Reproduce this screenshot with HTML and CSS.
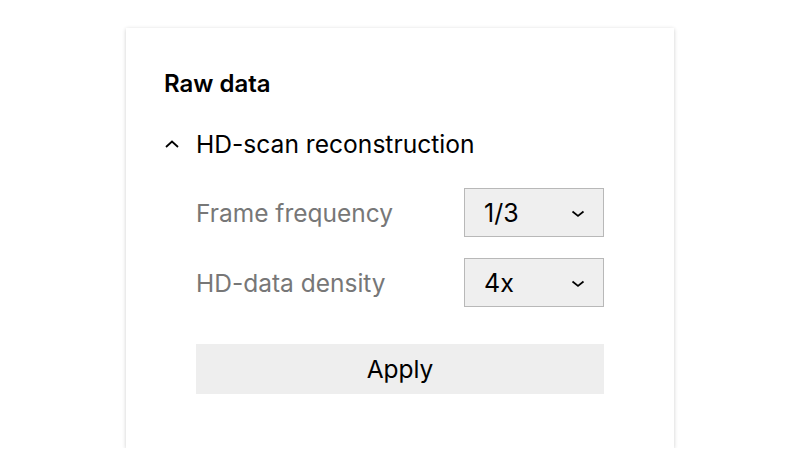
FILE: index.html
```html
<!DOCTYPE html>
<html>
<head>
<meta charset="utf-8">
<link rel="stylesheet" href="styles.css">
</head>
<body>
<div class="card">
  <h2 class="title">Raw data</h2>
  <div class="section-head">
    <svg class="caret-up" width="16" height="10" viewBox="0 0 16 10"><path d="M2 8 L8 2.5 L14 8" fill="none" stroke="#000" stroke-width="1.8"/></svg>
    <span>HD-scan reconstruction</span>
  </div>
  <div class="section-body">
    <div class="row">
      <span class="label">Frame frequency</span>
      <div class="select"><span>1/3</span><svg width="14" height="8" viewBox="0 0 14 8"><path d="M1.5 1.5 L7 6 L12.5 1.5" fill="none" stroke="#000" stroke-width="1.7"/></svg></div>
    </div>
    <div class="row">
      <span class="label">HD-data density</span>
      <div class="select"><span>4x</span><svg width="14" height="8" viewBox="0 0 14 8"><path d="M1.5 1.5 L7 6 L12.5 1.5" fill="none" stroke="#000" stroke-width="1.7"/></svg></div>
    </div>
    <button class="apply">Apply</button>
  </div>
</div>
</body>
</html>
```

FILE: styles.css
```css
html, body {
  margin: 0;
  padding: 0;
  background: #fff;
}
body {
  font-family: Inter, "Liberation Sans", sans-serif;
  color: #000;
  padding-top: 28px;
}
.card {
  box-sizing: border-box;
  width: 548px;
  height: 420px;
  margin-left: 126px;
  background: #fff;
  box-shadow: 0 1px 4px rgba(0,0,0,0.2);
  padding: 42px 70px 0 38px;
}
.title {
  margin: 0;
  font-size: 24px;
  font-weight: 600;
  line-height: 28px;
}
.section-head {
  display: flex;
  align-items: center;
  margin-top: 31px;
  height: 30px;
  font-size: 24.6px;
  line-height: 30px;
}
.caret-up {
  margin-right: 16px;
  margin-top: -1px;
}
.section-body {
  padding-left: 32px;
  margin-top: 29px;
}
.row {
  display: flex;
  align-items: center;
  justify-content: space-between;
  margin-bottom: 21px;
}
.label {
  color: #777;
  font-size: 24.5px;
}
.select {
  box-sizing: border-box;
  width: 140px;
  height: 49px;
  border: 1.5px solid #b8b8b8;
  background: #efefef;
  display: flex;
  align-items: center;
  justify-content: space-between;
  padding: 0 18px 0 19px;
  font-size: 25px;
}
.select svg {
  margin-top: 2px;
}
.apply {
  display: block;
  width: 408px;
  height: 50px;
  margin-top: 37px;
  border: none;
  background: #eeeeee;
  font-family: inherit;
  font-size: 24.5px;
  color: #000;
  padding: 0;
}
```
